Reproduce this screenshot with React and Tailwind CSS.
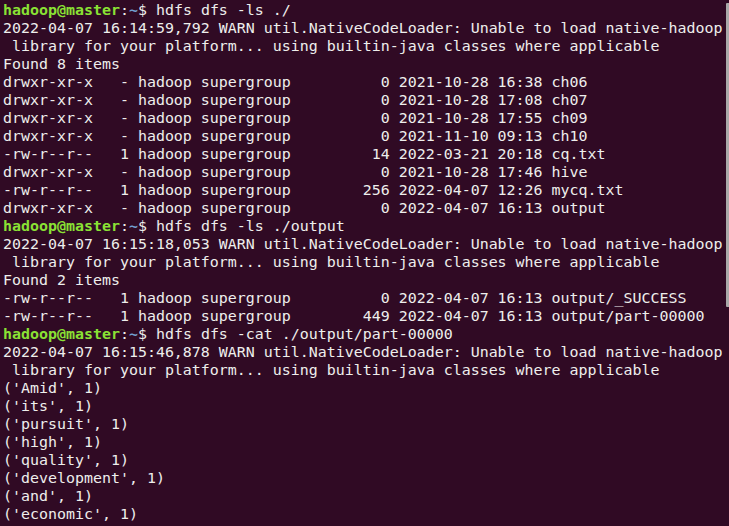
import React from 'react';

const lines = [
  { prompt: true, cmd: 'hdfs dfs -ls ./' },
  '2022-04-07 16:14:59,792 WARN util.NativeCodeLoader: Unable to load native-hadoop',
  ' library for your platform... using builtin-java classes where applicable',
  'Found 8 items',
  'drwxr-xr-x   - hadoop supergroup          0 2021-10-28 16:38 ch06',
  'drwxr-xr-x   - hadoop supergroup          0 2021-10-28 17:08 ch07',
  'drwxr-xr-x   - hadoop supergroup          0 2021-10-28 17:55 ch09',
  'drwxr-xr-x   - hadoop supergroup          0 2021-11-10 09:13 ch10',
  '-rw-r--r--   1 hadoop supergroup         14 2022-03-21 20:18 cq.txt',
  'drwxr-xr-x   - hadoop supergroup          0 2021-10-28 17:46 hive',
  '-rw-r--r--   1 hadoop supergroup        256 2022-04-07 12:26 mycq.txt',
  'drwxr-xr-x   - hadoop supergroup          0 2022-04-07 16:13 output',
  { prompt: true, cmd: 'hdfs dfs -ls ./output' },
  '2022-04-07 16:15:18,053 WARN util.NativeCodeLoader: Unable to load native-hadoop',
  ' library for your platform... using builtin-java classes where applicable',
  'Found 2 items',
  '-rw-r--r--   1 hadoop supergroup          0 2022-04-07 16:13 output/_SUCCESS',
  '-rw-r--r--   1 hadoop supergroup        449 2022-04-07 16:13 output/part-00000',
  { prompt: true, cmd: 'hdfs dfs -cat ./output/part-00000' },
  '2022-04-07 16:15:46,878 WARN util.NativeCodeLoader: Unable to load native-hadoop',
  ' library for your platform... using builtin-java classes where applicable',
  "('Amid', 1)",
  "('its', 1)",
  "('pursuit', 1)",
  "('high', 1)",
  "('quality', 1)",
  "('development', 1)",
  "('and', 1)",
  "('economic', 1)",
];

function Prompt({ cmd }) {
  return (
    <>
      <span className="font-bold text-[#8ae234]">hadoop@master</span>
      <span>:</span>
      <span className="font-bold text-[#729fcf]">~</span>
      <span>$ {cmd}</span>
    </>
  );
}

export default function App() {
  return (
    <div className="flex w-[729px] h-[526px] overflow-hidden bg-[#300a24] text-[#eeeeec]">
      <div className="flex-1 min-w-0 pl-[3px] pt-[1px] font-['DejaVu_Sans_Mono',monospace] text-[14.95px] leading-[18px] whitespace-pre">
        {lines.map((line, i) => (
          <div key={i} className="h-[18px]">
            {typeof line === 'string' ? line : <Prompt cmd={line.cmd} />}
          </div>
        ))}
      </div>
      {/* scrollbar */}
      <div className="w-[3px] shrink-0 pt-[3px]">
        <div className="h-[304px] bg-[#a9a9a9] rounded-l-[1px]" />
      </div>
    </div>
  );
}
